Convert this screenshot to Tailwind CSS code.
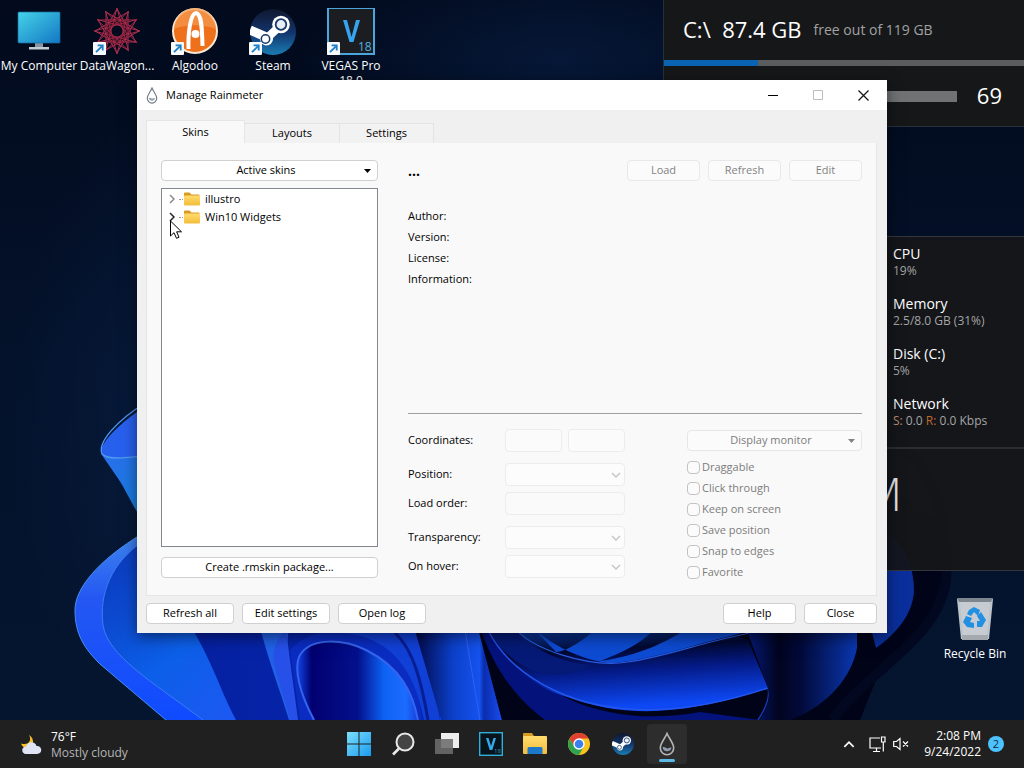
<!DOCTYPE html>
<html lang="en">
<head>
    <meta charset="UTF-8">
    <meta name="viewport" content="width=device-width, initial-scale=1.0">
    <title>Manage Rainmeter</title>
    <script src="https://cdn.jsdelivr.net/npm/@tailwindcss/browser@4"></script>
</head>
<body class="h-screen flex flex-col overflow-hidden bg-[#04102a] font-['Open_Sans','Noto_Sans',sans-serif] text-xs text-black">

    <!-- Shared symbols -->
    <svg class="hidden">
        <symbol id="shortcut" viewBox="0 0 13 13">
            <rect width="13" height="13" rx="1" fill="#f6fafd"/>
            <path d="M3 10.200 8.600 4.600M4.600 3.300H9.700V8.400" fill="none" stroke="#1a7fc4" stroke-width="1.800"/>
        </symbol>
        <symbol id="steam" viewBox="0 0 46 46">
            <circle cx="23" cy="23" r="23" fill="url(#steamFill)"/>
            <path d="M0 21 15 27.500" stroke="#fff" stroke-width="9"/>
            <path d="M16 30 31 16" stroke="#fff" stroke-width="8"/>
            <circle cx="16.500" cy="30" r="6.500" fill="#fff"/>
            <circle cx="15.500" cy="30" r="4.200" fill="none" stroke="#16396b" stroke-width="1.500"/>
            <circle cx="31" cy="15.500" r="8.800" fill="#fff"/>
            <circle cx="31" cy="15.500" r="5.300" fill="#e8eef5" stroke="#173a6c" stroke-width="1.800"/>
        </symbol>
        <symbol id="drop" viewBox="0 0 16 24">
            <path d="M8 1.500C6 6.500 1.300 11 1.300 16a6.700 6.700 0 0 0 13.400 0C14.700 11 10 6.500 8 1.500Z" fill="none" stroke="currentColor" stroke-width="1.600"/>
            <path d="M3.500 15.500c2-1.500 4 1.500 6 .8 1-.5 2-1 3-.6A4.600 4.600 0 0 1 3.500 15.500Z" fill="#8f9bb0"/>
        </symbol>
        <symbol id="folder" viewBox="0 0 17 14">
            <path d="M1 1.500Q1 .5 2 .5H6.500L8.500 2.500H15.500Q16.500 2.500 16.500 3.500V8H1Z" fill="#d99a22"/>
            <rect x="1" y="3.500" width="16" height="10" rx="1" fill="url(#folderFill)"/>
        </symbol>
        <symbol id="chevron" viewBox="0 0 10 6">
            <path d="M1 1 5 5 9 1" fill="none" stroke="currentColor" stroke-width="1.400"/>
        </symbol>
    </svg>

    <main class="relative flex-1">
        <!-- Wallpaper -->
        <svg class="absolute inset-0 size-full" viewBox="0 0 1024 720" preserveAspectRatio="xMidYMid slice">
            <defs>
                <linearGradient id="steamFill" x1="0" y1="0" x2="0" y2="1"><stop offset="0" stop-color="#10182f"/><stop offset=".5" stop-color="#12336b"/><stop offset="1" stop-color="#1a7db4"/></linearGradient>
                <linearGradient id="folderFill" x1="0" y1="0" x2="0" y2="1"><stop offset="0" stop-color="#ffdc6e"/><stop offset="1" stop-color="#f3bd3a"/></linearGradient>
                <linearGradient id="night" x1="0" y1="0" x2="0" y2="1"><stop offset="0" stop-color="#020a1c"/><stop offset=".5" stop-color="#04122b"/><stop offset="1" stop-color="#05152f"/></linearGradient>
                <radialGradient id="glow"><stop offset="0" stop-color="#0b2a5c"/><stop offset="1" stop-color="#0b2a5c" stop-opacity="0"/></radialGradient>
                <linearGradient id="petal" x1="0" y1="0" x2="0" y2="1"><stop offset="0" stop-color="#3f86ee"/><stop offset=".35" stop-color="#2457f2"/><stop offset="1" stop-color="#0f4bff"/></linearGradient>
                <linearGradient id="inner" x1="0" y1="0" x2="1" y2="1"><stop offset="0" stop-color="#0b35b8"/><stop offset=".5" stop-color="#0c5fe8"/><stop offset="1" stop-color="#2555f8"/></linearGradient>
                <linearGradient id="cyan" x1="0" y1="0" x2="1" y2="1"><stop offset="0" stop-color="#2a6eea"/><stop offset="1" stop-color="#068ad8"/></linearGradient>
                <linearGradient id="deep" x1="0" y1="0" x2="1" y2="0"><stop offset="0" stop-color="#0620a0"/><stop offset="1" stop-color="#0529b4"/></linearGradient>
                <linearGradient id="arch" x1="0" y1="0" x2="1" y2="0"><stop offset="0" stop-color="#1145e8"/><stop offset=".12" stop-color="#020070"/><stop offset=".5" stop-color="#03108c"/><stop offset=".72" stop-color="#0d62f4"/><stop offset=".9" stop-color="#1c6cff"/><stop offset="1" stop-color="#1540dc"/></linearGradient>
                <linearGradient id="bands" x1="0" y1="0" x2="1" y2="0"><stop offset="0" stop-color="#01043c"/><stop offset=".45" stop-color="#0b3fc8"/><stop offset=".75" stop-color="#1553ee"/><stop offset=".8" stop-color="#0a2dae"/><stop offset="1" stop-color="#1b4cf0"/></linearGradient>
                <linearGradient id="fold" x1="0" y1="0" x2=".2" y2="1"><stop offset="0" stop-color="#0b4fd4"/><stop offset=".35" stop-color="#020830"/><stop offset=".6" stop-color="#041a86"/><stop offset="1" stop-color="#0d48f4"/></linearGradient>
                <linearGradient id="right" x1="0" y1="0" x2="1" y2="0"><stop offset="0" stop-color="#061c80"/><stop offset=".3" stop-color="#010420"/><stop offset=".5" stop-color="#020a3a"/><stop offset="1" stop-color="#0a37b0"/></linearGradient>
            </defs>
            <rect width="1024" height="720" fill="url(#night)"/>
            <ellipse cx="200" cy="420" rx="190" ry="330" fill="url(#glow)" opacity=".4"/>
            <ellipse cx="560" cy="60" rx="260" ry="120" fill="url(#glow)" opacity=".4"/>

            <!-- Upper left petal -->
            <path d="M200 380C160 392 108 428 101 450 101 455 104 457 110 457L200 460Z" fill="#2860ee"/>
            <path d="M102 455C112 470 120 480 126 492 132 503 135 509 145 525L200 520V455Q120 460 102 455Z" fill="url(#cyan)"/>
            <path d="M145 403C118 420 97 442 102 454 107 460 125 458 145 456" fill="none" stroke="#4f9bf2" stroke-width="1.300"/>

            <!-- Main bloom -->
            <path d="M145 532C95 562 75 590 75 610 75 634 84 648 100 664L166 720H500L440 560Z" fill="url(#petal)"/>
            <path d="M145 540C111 562 99 594 103 625 108 656 150 680 203 720H300L260 560Z" fill="url(#inner)"/>
            <path d="M145 532C95 562 75 590 75 610 75 634 84 648 100 664L166 720" fill="none" stroke="#4490f5" stroke-width="1"/>
            <path d="M145 540C111 562 99 594 103 625 108 656 150 680 203 720" fill="none" stroke="#3b7df4" stroke-width="1"/>
            <path d="M186 620C208 650 220 690 236 720H440V620Z" fill="url(#deep)"/>
            <path d="M258 620C268 660 280 690 289 720H298C286 690 284 660 290 620Z" fill="#2161e6"/>
            <path d="M274 664C272 650 277 638 286 630L298 720H290Z" fill="#2650e8"/>
            <path d="M290 650C310 625 370 622 402 655 414 672 420 700 422 720H300Z" fill="#0a2cc0"/>
            <path d="M315 720C303 696 292 668 300 655 312 636 345 640 366 650 402 668 413 694 418 720Z" fill="url(#arch)"/>
            <path d="M314 720C300 694 293 668 300 655 312 636 345 640 366 650 402 668 413 694 418 720" fill="none" stroke="#3565ee" stroke-width="2"/>
            <path d="M345 633C390 638 414 668 424 720H440C434 682 426 655 412 625Z" fill="#1140d6"/>
            <path d="M395 633C414 650 422 685 428 720" fill="none" stroke="#071e94" stroke-width="3"/>

            <!-- Centre bands -->
            <path d="M412 620 441 720H502L476 620Z" fill="url(#bands)"/>
            <path d="M465 630 480 720" stroke="#3260f0" stroke-width="1"/>
            <path d="M476 620 502 720H860L900 620Z" fill="#010318"/>
            <path d="M478 620C492 670 520 702 545 720H760L700 712C600 730 520 690 492 620Z" fill="#04127c"/>
            <path d="M490 628C508 668 540 690 570 698 620 716 680 718 768 688L748 640 700 625Z" fill="url(#fold)"/>
            <path d="M512 625C530 650 560 662 590 665 560 685 515 674 490 633Z" fill="#051a76"/>
            <path d="M530 625C550 645 585 662 612 663 645 662 690 645 775 625L700 620C672 640 640 656 600 661 630 650 648 638 658 625H600C585 640 565 652 556 652Z" fill="#0d4bd2"/>
            <path d="M512 625C530 650 590 668 628 662 670 656 700 642 760 631" fill="none" stroke="#2a5be0" stroke-width="1.200"/>
            <path d="M488 630C505 665 540 685 565 695 620 717 690 714 768 688" fill="none" stroke="#2456ec" stroke-width="1.400"/>
            <path d="M768 688C771 700 762 714 758 720" fill="none" stroke="#143ab4" stroke-width="1.500"/>

            <!-- Right petals -->
            <path d="M748 625 768 688C772 700 764 712 760 720H832C850 690 905 660 928 628 943 602 948 570 936 520L880 480V625Z" fill="#010418"/>
            <path d="M745 625 768 688C771 702 764 712 760 720H790C830 705 852 675 857 648V625Z" fill="url(#right)"/>
            <path d="M860 520C900 530 914 560 914 592 912 614 898 632 876 648L870 625Z" fill="#0a2f9c"/>
            <path d="M860 430C925 440 950 500 946 580 938 640 870 668 832 720" fill="none" stroke="#02081f" stroke-width="10"/>
        </svg>

        <!-- Desktop shortcuts -->
        <nav class="relative flex text-center text-white">
            <a href="#" class="w-[78px] pt-2 flex flex-col items-center whitespace-nowrap">
                <svg class="w-12 h-12" viewBox="0 0 48 48">
                    <defs><linearGradient id="screen" x1="0" y1="0" x2="1" y2="1"><stop offset="0" stop-color="#45d3e8"/><stop offset="1" stop-color="#1377c4"/></linearGradient></defs>
                    <path d="M20 34H28V40H20Z" fill="#8795a1"/><rect x="14" y="39" width="20" height="2.500" fill="#c3ccd4"/>
                    <rect x="3" y="4" width="42" height="31" rx="1" fill="url(#screen)" stroke="#176ba0" stroke-width=".7"/>
                </svg>
                <span class="mt-0.5 leading-4">My Computer</span>
            </a>
            <a href="#" class="relative w-[78px] pt-2 flex flex-col items-center whitespace-nowrap">
                <svg class="w-12 h-12" viewBox="-24 -23 48 48" fill="none" stroke="#b8304f" stroke-width=".9">
                    <path d="M0-23 11.500 19.900-19.900-11.500 23 0-19.900 11.500 11.500-19.900 0 23-11.500-19.900 19.900 11.500-23 0 19.900-11.500-11.500 19.900Z"/>
                    <path d="M0-22 19 11H-19ZM0 22 19-11H-19ZM-22 0 11-19V19ZM22 0-11-19V19Z"/>
                    <path d="M0-14 12 7H-12ZM0 14 12-7H-12ZM-14 0 7-12V12ZM14 0-7-12V12Z" stroke="#8c1f3c"/>
                </svg>
                <svg class="absolute left-[15px] top-[42px] size-[13px]"><use href="#shortcut"/></svg>
                <span class="mt-0.5 leading-4">DataWagon...</span>
            </a>
            <a href="#" class="relative w-[78px] pt-2 flex flex-col items-center whitespace-nowrap">
                <svg class="w-12 h-12" viewBox="0 0 48 48">
                    <circle cx="24" cy="23" r="22" fill="#ee701b" stroke="#fbe9d6" stroke-width="2"/>
                    <path d="M3 21C15 16 32 16 45 21A21 21 0 0 0 3 21Z" fill="#f59a50" opacity=".7"/>
                    <path d="M17.500 41C17 26 19 6 25 5 31 6 31 22 31.500 38" fill="none" stroke="#fff" stroke-width="4"/>
                    <circle cx="24.500" cy="26" r="4" fill="#fff"/>
                </svg>
                <svg class="absolute left-[15px] top-[42px] size-[13px]"><use href="#shortcut"/></svg>
                <span class="mt-0.5 leading-4">Algodoo</span>
            </a>
            <a href="#" class="relative w-[78px] pt-2 flex flex-col items-center whitespace-nowrap">
                <svg class="size-12 p-px"><use href="#steam"/></svg>
                <svg class="absolute left-[15px] top-[42px] size-[13px]"><use href="#shortcut"/></svg>
                <span class="mt-0.5 leading-4">Steam</span>
            </a>
            <a href="#" class="relative w-[78px] pt-2 flex flex-col items-center">
                <svg class="w-12 h-12" viewBox="0 0 48 48">
                    <rect x="1" y="0" width="46" height="46" fill="#1c1d20" stroke="#4aa6dc" stroke-width="2"/>
                    <path d="M16 12H20L24.500 29 29 12H33L26.500 34H22.500Z" fill="#35a4ee"/>
                    <text x="31" y="43" font-size="12" font-family="Open Sans" fill="#4fb0e6">18</text>
                </svg>
                <svg class="absolute left-[15px] top-[42px] size-[13px]"><use href="#shortcut"/></svg>
                <span class="mt-0.5 leading-[15px]">VEGAS Pro<br>18.0</span>
            </a>
        </nav>

        <a href="#" class="absolute right-2.5 top-[596px] w-[78px] flex flex-col items-center text-white whitespace-nowrap">
            <svg class="w-9 h-[46px]" viewBox="0 0 36 46">
                <path d="M0 3 4 43H32L36 3Z" fill="#bcc4cc"/><path d="M0 2H36L34 6H2Z" fill="#7d868e"/>
                <path d="M3 6H33L30 39H6Z" fill="#c6ccd2"/><path d="M5 39H31V44H5Z" fill="#a4a9ae"/>
                <g fill="#2290e2"><path d="M12 14 17 11 23 14 21 20 17 16 14 20 10 18Z"/><path d="M24 16 29 24 25 31H20V25H23L20 20Z"/><path d="M9 20 15 22 13 26 17 27V32L10 31 6 26Z"/></g>
            </svg>
            <span class="mt-1 leading-4">Recycle Bin</span>
        </a>

        <!-- Drive and volume widget -->
        <aside class="absolute right-0 top-0 w-[361px] h-[127px] bg-[#161719] border-l border-b border-[#26303a]">
            <div class="h-[60px] pl-[19px] flex items-center gap-3 text-white">
                <span class="text-[22px] whitespace-pre">C:\  87.4 GB</span>
                <span class="text-sm text-[#a2a2a2]">free out of 119 GB</span>
            </div>
            <div class="h-1.5 bg-[#5b5c5e]"><div class="h-full bg-[#0a64b4]" style="width: 26%"></div></div>
            <div class="h-[60px] pl-5 pr-[22px] flex items-center gap-5">
                <div class="flex-1 h-[11px] bg-[#717273]"></div>
                <span class="text-[22px] text-white">69</span>
            </div>
        </aside>

        <!-- System widget -->
        <aside class="absolute right-0 top-[236px] w-[361px] h-[335px] bg-[#151619]/94 border-y border-[#33373c] text-white">
            <dl class="h-[212px] pl-[230px] pt-[7px] flex flex-col gap-4 border-b-2 border-[#2c2d31] text-[#a5a5a5]">
                <div><dt class="text-sm leading-5 text-white">CPU</dt><dd class="leading-[14px]">19%</dd></div>
                <div><dt class="text-sm leading-5 text-white">Memory</dt><dd class="leading-[14px]">2.5/8.0 GB (31%)</dd></div>
                <div><dt class="text-sm leading-5 text-white">Disk (C:)</dt><dd class="leading-[14px]">5%</dd></div>
                <div><dt class="text-sm leading-5 text-white">Network</dt><dd class="leading-[14px]"><span class="text-[#b98a6c]">S:</span> 0.0 <span class="text-[#c0682a]">R:</span> 0.0 Kbps</dd></div>
            </dl>
            <div class="w-[239px] pt-3.5 text-right font-light text-[46px] leading-[60px] text-[#e4e4e4]">PM</div>
        </aside>

        <!-- Manage Rainmeter window -->
        <section class="absolute left-[137px] top-20 w-[750px] bg-[#f0f0f0] text-[11px] shadow-[0_4px_14px_rgba(0,0,0,.5)]">
            <header class="h-[30px] pl-[9px] pr-px bg-white flex items-center">
                <svg class="w-3 h-[17px] text-[#6f7884]"><use href="#drop"/></svg>
                <h1 class="ml-2 flex-1">Manage Rainmeter</h1>
                <button aria-label="Minimize" class="w-[45px] h-7 grid place-items-center"><svg class="size-2.5" viewBox="0 0 10 10"><path d="M0 5.500H10" stroke="#000"/></svg></button>
                <button aria-label="Maximize" disabled class="w-[45px] h-7 grid place-items-center"><svg class="size-2.5" viewBox="0 0 10 10"><path d="M.5.5H9.500V9.500H.5Z" fill="none" stroke="#bdbdbd"/></svg></button>
                <button aria-label="Close window" class="w-[46px] h-7 grid place-items-center"><svg class="size-[11px]" viewBox="0 0 11 11"><path d="M.5.5 10.500 10.500M10.500.5.5 10.500" stroke="#111" stroke-width="1.200"/></svg></button>
            </header>

            <div class="pl-[9px] pr-2.5 pt-2.5 pb-[9px]">
                <div role="tablist" class="flex items-end">
                    <button role="tab" aria-selected="true" class="w-[99px] h-[23px] bg-[#f9f9f9] border border-b-0 border-[#e5e5e5]">Skins</button>
                    <button role="tab" class="w-[95px] h-5 bg-[#f2f2f2] border border-l-0 border-b-0 border-[#e3e3e3]">Layouts</button>
                    <button role="tab" class="w-[94px] h-5 bg-[#f2f2f2] border border-l-0 border-b-0 border-[#e3e3e3]">Settings</button>
                </div>

                <div class="h-[453px] px-[14px] pt-[17px] flex gap-[30px] bg-[#f9f9f9] border border-t-0 border-[#e5e5e5]">
                    <!-- Skin list -->
                    <div class="w-[217px] flex flex-col">
                        <button class="h-[21px] px-1.5 flex items-center bg-white border border-[#d0d0d0] rounded-sm">
                            <span class="flex-1">Active skins</span>
                            <svg class="w-[7px] h-1" viewBox="0 0 7 4"><path d="M0 0H7L3.500 4Z"/></svg>
                        </button>
                        <ul class="relative mt-[7px] h-[359px] pl-[7px] pt-px bg-white border border-[#828790]">
                            <li class="h-[18px] flex items-center">
                                <svg class="w-1.5 h-2.5 mr-1 text-[#8a8a8a]" viewBox="0 0 6 10"><path d="M1 1 5 5 1 9" fill="none" stroke="currentColor" stroke-width="1.500"/></svg>
                                <span class="w-1 border-t border-dotted border-[#999]"></span>
                                <svg class="w-[17px] h-3.5"><use href="#folder"/></svg>
                                <span class="ml-[5px]">illustro</span>
                            </li>
                            <li class="h-[18px] flex items-center">
                                <svg class="w-1.5 h-2.5 mr-1 text-[#222]" viewBox="0 0 6 10"><path d="M1 1 5 5 1 9" fill="none" stroke="currentColor" stroke-width="1.500"/></svg>
                                <span class="w-1 border-t border-dotted border-[#999]"></span>
                                <svg class="w-[17px] h-3.5"><use href="#folder"/></svg>
                                <span class="ml-[5px]">Win10 Widgets</span>
                            </li>
                            <!-- Mouse pointer -->
                            <svg class="absolute left-2 top-[31px] w-3 h-[19px]" viewBox="0 0 12 19"><path d="M.5 1V16L4 12.700 6.500 18.300 9 17.200 6.600 11.800H11.500Z" fill="#fff" stroke="#000"/></svg>
                        </ul>
                        <button class="mt-2.5 h-[21px] bg-white border border-[#d0d0d0] rounded-sm">Create .rmskin package...</button>
                    </div>

                    <!-- Skin details -->
                    <div class="flex-1">
                        <div class="h-[21px] flex items-center gap-2 text-[#838383]">
                            <strong class="flex-1 text-sm leading-4 text-black">...</strong>
                            <button disabled class="w-[73px] h-[21px] bg-[#fbfbfb] border border-[#e8e8e8] rounded-sm">Load</button>
                            <button disabled class="w-[73px] h-[21px] bg-[#fbfbfb] border border-[#e8e8e8] rounded-sm">Refresh</button>
                            <button disabled class="w-[73px] h-[21px] bg-[#fbfbfb] border border-[#e8e8e8] rounded-sm">Edit</button>
                        </div>
                        <div class="mt-6 h-52 leading-[21px]">
                            <p>Author:</p>
                            <p>Version:</p>
                            <p>License:</p>
                            <p>Information:</p>
                        </div>
                        <hr class="border-[#a0a0a0]">

                        <div class="mt-[15px] flex justify-between">
                            <form class="w-[217px]">
                                <div class="h-[23px] mb-[11px] flex items-center">
                                    <label for="coordX" class="w-[97px]">Coordinates:</label>
                                    <input id="coordX" disabled class="w-[57px] h-[23px] bg-[#fbfbfb] border border-[#ececec] rounded-sm">
                                    <input id="coordY" aria-label="Y coordinate" disabled class="ml-1.5 w-[57px] h-[23px] bg-[#fbfbfb] border border-[#ececec] rounded-sm">
                                </div>
                                <div class="relative h-[23px] mb-1.5 flex items-center">
                                    <label for="position" class="w-[97px]">Position:</label>
                                    <select id="position" disabled class="flex-1 h-[23px] appearance-none bg-[#fcfcfc] border border-[#ececec] rounded-sm opacity-100"></select>
                                    <svg class="absolute right-1 w-2.5 h-1.5 text-[#c4c4c4]"><use href="#chevron"/></svg>
                                </div>
                                <div class="h-[23px] mb-[11px] flex items-center">
                                    <label for="order" class="w-[97px]">Load order:</label>
                                    <input id="order" disabled class="w-[120px] h-[23px] bg-[#fafafa] border border-[#ececec] rounded-sm">
                                </div>
                                <div class="relative h-[23px] mb-1.5 flex items-center">
                                    <label for="transparency" class="w-[97px]">Transparency:</label>
                                    <select id="transparency" disabled class="flex-1 h-[23px] appearance-none bg-[#fcfcfc] border border-[#ececec] rounded-sm opacity-100"></select>
                                    <svg class="absolute right-1 w-2.5 h-1.5 text-[#c4c4c4]"><use href="#chevron"/></svg>
                                </div>
                                <div class="relative h-[23px] flex items-center">
                                    <label for="hover" class="w-[97px]">On hover:</label>
                                    <select id="hover" disabled class="flex-1 h-[23px] appearance-none bg-[#fcfcfc] border border-[#ececec] rounded-sm opacity-100"></select>
                                    <svg class="absolute right-1 w-2.5 h-1.5 text-[#c4c4c4]"><use href="#chevron"/></svg>
                                </div>
                            </form>

                            <div class="w-[175px] pt-px text-[#7c7c7c]">
                                <button disabled class="w-full h-[21px] mb-1.5 px-1.5 flex items-center bg-[#fbfbfb] border border-[#e6e6e6] rounded-sm">
                                    <span class="flex-1">Display monitor</span>
                                    <svg class="w-[7px] h-1" viewBox="0 0 7 4"><path d="M0 0H7L3.500 4Z" fill="#838383"/></svg>
                                </button>
                                <label class="h-[21px] flex items-center gap-0.5"><input type="checkbox" disabled class="size-[13px] appearance-none bg-[#fbfbfb] border border-[#c3c3c3] rounded-sm">Draggable</label>
                                <label class="h-[21px] flex items-center gap-0.5"><input type="checkbox" disabled class="size-[13px] appearance-none bg-[#fbfbfb] border border-[#c3c3c3] rounded-sm">Click through</label>
                                <label class="h-[21px] flex items-center gap-0.5"><input type="checkbox" disabled class="size-[13px] appearance-none bg-[#fbfbfb] border border-[#c3c3c3] rounded-sm">Keep on screen</label>
                                <label class="h-[21px] flex items-center gap-0.5"><input type="checkbox" disabled class="size-[13px] appearance-none bg-[#fbfbfb] border border-[#c3c3c3] rounded-sm">Save position</label>
                                <label class="h-[21px] flex items-center gap-0.5"><input type="checkbox" disabled class="size-[13px] appearance-none bg-[#fbfbfb] border border-[#c3c3c3] rounded-sm">Snap to edges</label>
                                <label class="h-[21px] flex items-center gap-0.5"><input type="checkbox" disabled class="size-[13px] appearance-none bg-[#fbfbfb] border border-[#c3c3c3] rounded-sm">Favorite</label>
                            </div>
                        </div>
                    </div>
                </div>

                <div class="mt-[7px] flex gap-2">
                    <button class="w-[88px] h-[21px] bg-white border border-[#d0d0d0] rounded">Refresh all</button>
                    <button class="w-[88px] h-[21px] bg-white border border-[#d0d0d0] rounded">Edit settings</button>
                    <button class="w-[88px] h-[21px] bg-white border border-[#d0d0d0] rounded">Open log</button>
                    <button class="ml-auto w-[73px] h-[21px] bg-white border border-[#d0d0d0] rounded">Help</button>
                    <button class="w-[73px] h-[21px] bg-white border border-[#d0d0d0] rounded">Close</button>
                </div>
            </div>
        </section>
    </main>

    <!-- Taskbar -->
    <footer class="relative h-12 pl-5 pr-5 grid grid-cols-[1fr_auto_1fr] items-center bg-[#202020] text-white">
        <button class="pt-0.5 flex items-center gap-[9px] text-left">
            <svg class="w-[22px] h-5" viewBox="0 0 22 20">
                <path d="M9 0C12 5 9 11 1 8.500 2 13 8 14 11.500 11 14.500 8 13 2 9 0Z" fill="#f6bf26"/>
                <path d="M6 19C1 19 1 11.500 6 11.500 8 6 15 6 16.500 11 22.500 10.500 23 19 17 19Z" fill="#dfe3f3"/>
            </svg>
            <span class="leading-4">76°F<br><span class="text-[#b5b5b5]">Mostly cloudy</span></span>
        </button>

        <nav class="pl-px flex gap-1">
            <button aria-label="Start" class="size-10 grid place-items-center">
                <svg class="size-6" viewBox="0 0 24 24"><defs><linearGradient id="win" x1="0" y1="0" x2="1" y2="1"><stop offset="0" stop-color="#7be0fb"/><stop offset="1" stop-color="#1a9bf0"/></linearGradient></defs><path d="M0 0H11.500V11.500H0ZM12.500 0H24V11.500H12.500ZM0 12.500H11.500V24H0ZM12.500 12.500H24V24H12.500Z" fill="url(#win)"/></svg>
            </button>
            <button aria-label="Search" class="size-10 grid place-items-center">
                <svg class="size-6" viewBox="0 0 24 24"><circle cx="14" cy="10" r="8.500" fill="#444" stroke="#e8e8e8" stroke-width="2"/><path d="M8 16.500 2 22.500" stroke="#e8e8e8" stroke-width="2.600"/></svg>
            </button>
            <button aria-label="Task view" class="size-10 grid place-items-center">
                <svg class="size-6" viewBox="0 0 24 24"><rect x="6" y="1" width="18" height="15" fill="#eee"/><rect y="7" width="18" height="15" fill="#6c6c6c" opacity=".88"/></svg>
            </button>
            <button aria-label="VEGAS Pro" class="size-10 grid place-items-center">
                <svg class="size-6" viewBox="0 0 24 24"><rect x=".7" y=".7" width="22.600" height="22.600" fill="#08131b" stroke="#2fb0dc" stroke-width="1.400"/><path d="M7 6H9.500L12 14 14.500 6H17L13.300 18H10.700Z" fill="#35a8e8"/><text x="15" y="21" font-size="6" font-family="Open Sans" fill="#3a8fb8">18</text></svg>
            </button>
            <button aria-label="File Explorer" class="size-10 grid place-items-center">
                <svg class="size-6" viewBox="0 0 24 24"><path d="M0 2Q0 1 1 1H9L11 4V8H0Z" fill="#d79a24"/><rect y="4" width="24" height="18" rx="1" fill="url(#folderFill)"/><path d="M4.500 22V16.500Q4.500 15 6 15H18Q19.500 15 19.500 16.500V22Z" fill="#1c78c8"/></svg>
            </button>
            <button aria-label="Chrome" class="size-10 grid place-items-center">
                <svg class="size-6" viewBox="0 0 24 24"><circle cx="12" cy="12" r="11" fill="#f8c31c"/><path d="M2.500 6.500A11 11 0 0 1 21.500 6.500H12L7.200 14.800Z" fill="#e0402f"/><path d="M2.500 6.500A11 11 0 0 0 12 23L16.800 14.800H7.200Z" fill="#2fa150"/><circle cx="12" cy="12" r="5.700" fill="#fff"/><circle cx="12" cy="12" r="4.300" fill="#3a7fee"/></svg>
            </button>
            <button aria-label="Steam" class="size-10 grid place-items-center">
                <svg class="size-[22px]"><use href="#steam"/></svg>
            </button>
            <button aria-label="Rainmeter" class="relative size-10 grid place-items-center rounded bg-[#2d2d2d]">
                <svg class="w-4 h-6 text-[#b4b4b4]"><use href="#drop"/></svg>
                <span class="absolute bottom-0.5 w-4 h-[3px] rounded-full bg-[#5cb8e4]"></span>
            </button>
        </nav>

        <div class="flex items-center justify-end">
            <button aria-label="Show hidden icons" class="mr-3.5"><svg class="w-3 h-[7px] rotate-180"><use href="#chevron"/></svg></button>
            <button aria-label="Network" class="mr-[7px]">
                <svg class="w-[17px] h-[17px]" viewBox="0 0 17 17" fill="none" stroke="#fff" stroke-width="1.200"><path d="M11 2H1V12H12M4 15.500H11M7.500 12V15.500M12.500 1H16V6H12.500ZM14.300 6V15.500"/></svg>
            </button>
            <button aria-label="Volume muted" class="mr-[15px]">
                <svg class="w-4 h-3.5" viewBox="0 0 16 14" fill="none" stroke="#fff" stroke-width="1.200"><path d="M.7 4.500H3.500L7 1.500V12.500L3.500 9.500H.7ZM10 4.500 15 9.500M15 4.500 10 9.500"/></svg>
            </button>
            <button class="text-right leading-4">2:08 PM<br>9/24/2022</button>
            <span class="ml-[7px] size-4 rounded-full bg-[#4cc2ff] text-[#10293a] text-[11px] leading-4 text-center">2</span>
        </div>
    </footer>
</body>
</html>
